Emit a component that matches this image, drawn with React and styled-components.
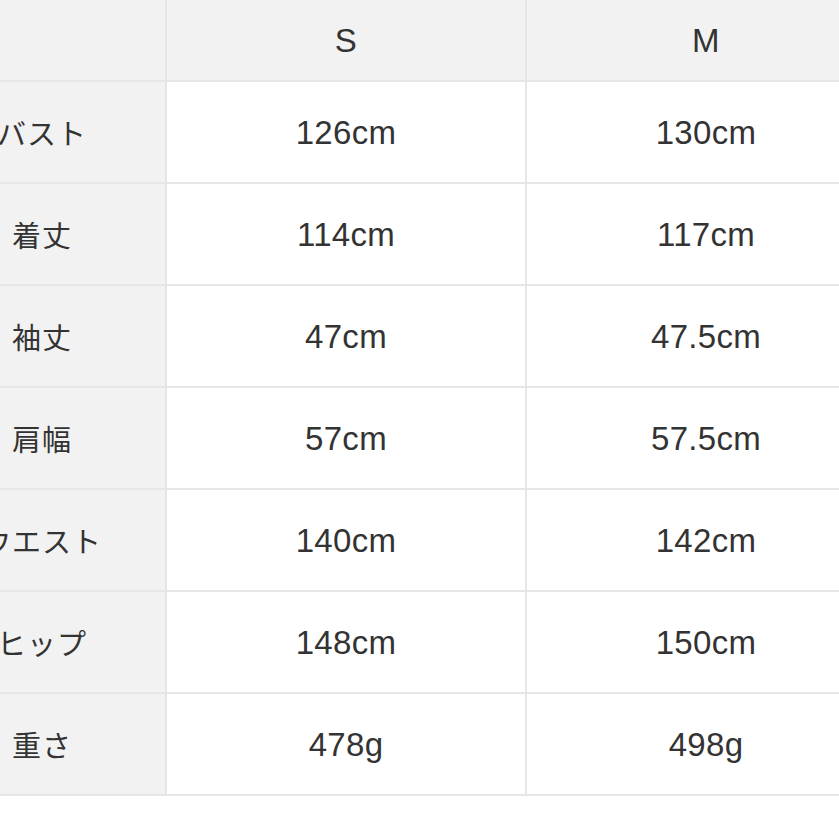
import { Fragment } from 'react'
import styled, { createGlobalStyle } from 'styled-components'

const GlobalStyle = createGlobalStyle`
  html, body {
    margin: 0;
    padding: 0;
    background: #ffffff;
    overflow: hidden;
  }
`;

const Page = styled.div`
  width: 839px;
  height: 839px;
  overflow: hidden;
  background: #ffffff;
`;

const Chart = styled.div`
  display: grid;
  grid-template-columns: 246px 358px 358px;
  grid-template-rows: 80px repeat(7, 100px);
  gap: 2px;
  padding-bottom: 2px;
  margin-left: -81px;
  width: max-content;
  background: #e6e6e6;
`;

const Cell = styled.div`
  display: flex;
  align-items: center;
  justify-content: center;
  background: ${p => (p.$head ? '#f2f2f2' : '#ffffff')};
  color: #333333;
  font-family: "Liberation Sans", "Noto Sans CJK JP", sans-serif;
  font-size: ${p => (p.$label ? '29px' : '33px')};
  letter-spacing: ${p => (p.$label ? '1px' : '0.3px')};
  padding-top: ${p => (p.$label ? '0' : '2px')};
`;

const sizes = ['S', 'M']

const rows = [
  ['バスト', '126cm', '130cm'],
  ['着丈', '114cm', '117cm'],
  ['袖丈', '47cm', '47.5cm'],
  ['肩幅', '57cm', '57.5cm'],
  ['ウエスト', '140cm', '142cm'],
  ['ヒップ', '148cm', '150cm'],
  ['重さ', '478g', '498g'],
]

export default function App() {
  return (
    <Page>
      <GlobalStyle />
      <Chart>
        <Cell $head />
        {sizes.map(s => (
          <Cell key={s} $head>{s}</Cell>
        ))}
        {rows.map(([label, s, m]) => (
          <Fragment key={label}>
            <Cell $head $label>{label}</Cell>
            <Cell>{s}</Cell>
            <Cell>{m}</Cell>
          </Fragment>
        ))}
      </Chart>
    </Page>
  )
}
